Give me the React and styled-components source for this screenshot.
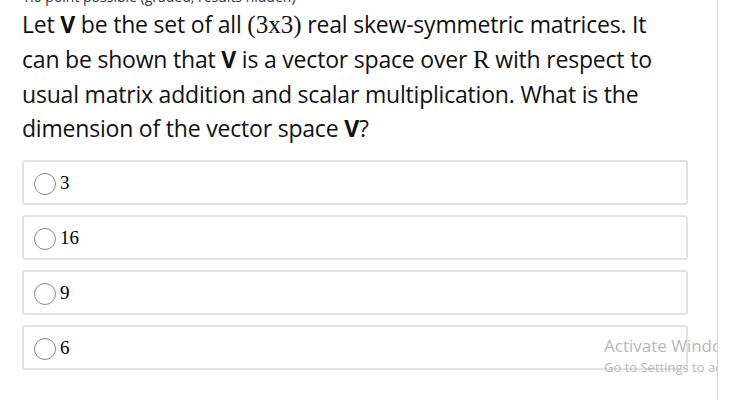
import React from 'react';
import styled, { createGlobalStyle } from 'styled-components';

const GlobalStyle = createGlobalStyle`
  html, body {
    margin: 0;
    padding: 0;
    background: #fff;
    overflow: hidden;
  }
`;

const Page = styled.div`
  position: relative;
  width: 717px;
  height: 400px;
  border-right: 1px solid #d9d9d9;
  overflow: hidden;
`;

const Content = styled.div`
  width: 666px;
  padding-left: 22px;
`;

const PointsNote = styled.div`
  margin-top: -11px;
  height: 16px;
  font-family: 'Open Sans', sans-serif;
  font-size: 14px;
  line-height: 16px;
  color: #333;
  white-space: nowrap;
`;

const Question = styled.p`
  margin: 0;
  padding-top: 2px;
  font-family: 'Open Sans', sans-serif;
  font-size: 23px;
  letter-spacing: -0.2px;
  line-height: 34px;
  color: #111;
`;

const Bold = styled.b`
  font-weight: 700;
`;

const MathText = styled.span`
  font-family: 'Liberation Serif', serif;
  font-size: 25px;
  letter-spacing: 0;
`;

const Options = styled.div`
  display: flex;
  flex-direction: column;
  gap: 10px;
  margin-top: 15px;
`;

const OptionBox = styled.label`
  display: flex;
  align-items: center;
  gap: 4px;
  height: 41px;
  padding: 0 10px;
  border: 2px solid #e3e3e3;
  border-radius: 3px;
`;

const Radio = styled.span`
  display: inline-block;
  width: 20px;
  height: 20px;
  border: 1px solid #8a8a8a;
  border-radius: 50%;
  margin-top: 3px;
`;

const OptionText = styled.span`
  font-family: 'Liberation Serif', serif;
  font-size: 19px;
  color: #000;
`;

const Watermark = styled.div`
  position: absolute;
  left: 604px;
  top: 334px;
  font-family: 'Open Sans', sans-serif;
  color: #b8b8b8;
  white-space: nowrap;
  pointer-events: none;
`;

const WatermarkTitle = styled.div`
  font-size: 17px;
  line-height: 24px;
`;

const WatermarkSub = styled.div`
  font-size: 13px;
  line-height: 18px;
`;

const answers = ['3', '16', '9', '6'];

export default function App() {
  return (
    <>
      <GlobalStyle />
      <Page>
        <Content>
          <PointsNote>1.0 point possible (graded, results hidden)</PointsNote>
          <Question>
            Let <Bold>V</Bold> be the set of all <MathText>(3x3)</MathText> real skew-symmetric matrices. It
            <br />
            can be shown that <Bold>V</Bold> is a vector space over <MathText>R</MathText> with respect to
            <br />
            usual matrix addition and scalar multiplication. What is the
            <br />
            dimension of the vector space <Bold>V</Bold>?
          </Question>
          <Options>
            {answers.map((a) => (
              <OptionBox key={a}>
                <Radio />
                <OptionText>{a}</OptionText>
              </OptionBox>
            ))}
          </Options>
        </Content>
        <Watermark>
          <WatermarkTitle>Activate Windows</WatermarkTitle>
          <WatermarkSub>Go to Settings to activate Windows.</WatermarkSub>
        </Watermark>
      </Page>
    </>
  );
}
